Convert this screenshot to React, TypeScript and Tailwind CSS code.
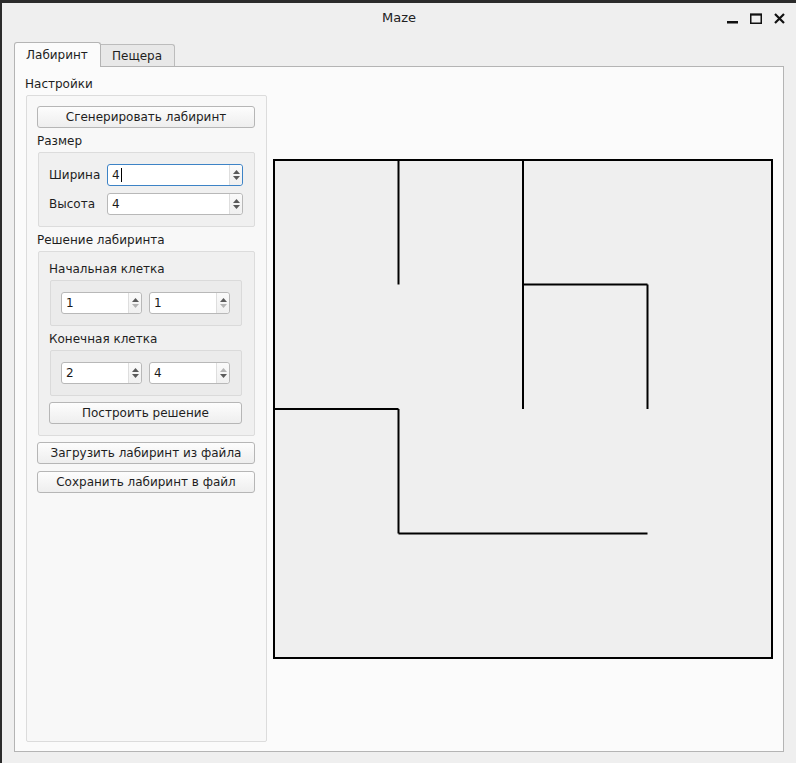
import React from "react";

const Btn = ({ label, className = "" }: { label: string; className?: string }) => (
  <div
    className={`h-[22px] rounded-[3px] border border-[#b6b6b6] bg-gradient-to-b from-[#fdfdfd] to-[#eeeeee] flex items-center justify-center text-[12px] text-[#1e1e1e] ${className}`}
  >
    {label}
  </div>
);

const Spin = ({
  value,
  width,
  upOff = false,
  downOff = false,
  focused = false,
}: {
  value: string;
  width: string;
  upOff?: boolean;
  downOff?: boolean;
  focused?: boolean;
}) => (
  <div
    className={`h-[22px] ${width} rounded-[3px] border bg-white flex ${
      focused ? "border-[#3d83c6]" : "border-[#b8b8b8]"
    }`}
  >
    <div className="flex-1 flex items-center pl-[4px] text-[12px] text-[#1a1a1a]">
      {value}
      {focused && <span className="ml-[1px] w-px h-[14px] bg-black" />}
    </div>
    <div className="w-[13px] border-l border-[#dedede] bg-gradient-to-b from-[#fafafa] to-[#f0f0f0] flex flex-col items-center justify-center gap-[2px] rounded-r-[3px]">
      <svg width="7" height="4" viewBox="0 0 7 4">
        <path d="M0 4 L3.5 0 L7 4 Z" fill={upOff ? "#b4b4b4" : "#5a5a5a"} />
      </svg>
      <svg width="7" height="4" viewBox="0 0 7 4">
        <path d="M0 0 L3.5 4 L7 0 Z" fill={downOff ? "#b4b4b4" : "#5a5a5a"} />
      </svg>
    </div>
  </div>
);

const Label = ({ text, className = "" }: { text: string; className?: string }) => (
  <div className={`h-[14px] leading-[14px] text-[12px] text-[#1e1e1e] ${className}`}>{text}</div>
);

const Maze = () => {
  const c = 124.5;
  const p = (k: number) => 1 + c * k;
  const walls: [number, number, number, number][] = [
    [1, 0, 1, 1],
    [2, 0, 2, 2],
    [2, 1, 3, 1],
    [3, 1, 3, 2],
    [0, 2, 1, 2],
    [1, 2, 1, 3],
    [1, 3, 3, 3],
  ];
  return (
    <svg width="501" height="501" viewBox="0 0 501 501" className="block">
      <rect x="1" y="1" width="498" height="498" fill="#efefef" stroke="#000" strokeWidth="2" />
      {walls.map(([x1, y1, x2, y2], i) => (
        <line key={i} x1={p(x1)} y1={p(y1)} x2={p(x2)} y2={p(y2)} stroke="#000" strokeWidth="2" />
      ))}
    </svg>
  );
};

export default function App() {
  return (
    <div
      className="w-[796px] h-[763px] bg-[#efefef] border-t-[3px] border-l-[2px] border-[#2b2b2b] flex flex-col text-[#1e1e1e]"
      style={{ fontFamily: '"DejaVu Sans", "Liberation Sans", sans-serif' }}
    >
      {/* title bar */}
      <div className="h-[30px] grid grid-cols-[1fr_auto_1fr] items-center">
        <div />
        <div className="text-[13px] text-[#222]">Maze</div>
        <div className="flex justify-end items-center gap-[12px] pr-[11px]">
          <svg width="11" height="11" viewBox="0 0 11 11">
            <rect x="0" y="8" width="11" height="2.5" fill="#111" />
          </svg>
          <svg width="12" height="11" viewBox="0 0 12 11">
            <rect x="0.75" y="1.5" width="10.5" height="8.75" fill="none" stroke="#111" strokeWidth="1.5" />
            <rect x="0" y="0.5" width="12" height="2" fill="#111" />
          </svg>
          <svg width="11" height="11" viewBox="0 0 11 11">
            <path d="M1 1 L10 10 M10 1 L1 10" stroke="#111" strokeWidth="2.2" />
          </svg>
        </div>
      </div>

      {/* tabs */}
      <div className="ml-[12px] mt-[9px] flex items-end">
        <div className="h-[25px] w-[87px] bg-[#fbfbfb] border border-b-0 border-[#b4b4b4] rounded-t-[3px] flex items-center pl-[11px] text-[12px] -mb-px relative">
          Лабиринт
        </div>
        <div className="h-[22px] w-[74px] bg-[#e8e8e8] border border-b-0 border-l-0 border-[#bcbcbc] rounded-tr-[3px] flex items-center pl-[11px] text-[12px]">
          Пещера
        </div>
      </div>

      {/* pane */}
      <div className="ml-[12px] w-[770px] h-[686px] bg-[#fbfbfb] border border-[#b4b4b4] flex">
        <div className="ml-[11px] w-[241px] flex flex-col pb-[9px]">
          <Label text="Настройки" className="mt-[10px] mb-[4px] -ml-[1px]" />
          <div className="flex-1 bg-[#f8f8f8] border border-[#dcdcdc] rounded-[2px] pl-[10px] pr-[11px] pt-[10px]">
            <Btn label="Сгенерировать лабиринт" />
            <Label text="Размер" className="mt-[6px] mb-[4px]" />
            <div className="bg-[#f0f0f0] border border-[#dcdcdc] rounded-[2px] ml-px pt-[11px] pb-[11px] pl-[10px] pr-[11px] flex flex-col gap-[7px]">
              <div className="flex items-center justify-between">
                <span className="text-[12px]">Ширина</span>
                <Spin value="4" width="w-[136px]" focused />
              </div>
              <div className="flex items-center justify-between">
                <span className="text-[12px]">Высота</span>
                <Spin value="4" width="w-[136px]" />
              </div>
            </div>
            <Label text="Решение лабиринта" className="mt-[6px] mb-[4px]" />
            <div className="bg-[#f0f0f0] border border-[#dcdcdc] rounded-[2px] ml-px pt-[10px] pb-[11px] pl-[10px] pr-[12px]">
              <Label text="Начальная клетка" className="mb-[4px]" />
              <div className="bg-[#ebebeb] border border-[#dadada] rounded-[2px] ml-px h-[46px] pl-[10px] flex items-center gap-[7px]">
                <Spin value="1" width="w-[81px]" downOff />
                <Spin value="1" width="w-[81px]" downOff />
              </div>
              <Label text="Конечная клетка" className="mt-[6px] mb-[4px]" />
              <div className="bg-[#ebebeb] border border-[#dadada] rounded-[2px] ml-px h-[46px] pl-[10px] flex items-center gap-[7px]">
                <Spin value="2" width="w-[81px]" />
                <Spin value="4" width="w-[81px]" upOff />
              </div>
              <Btn label="Построить решение" className="mt-[6px]" />
            </div>
            <Btn label="Загрузить лабиринт из файла" className="mt-[6px]" />
            <Btn label="Сохранить лабиринт в файл" className="mt-[7px]" />
          </div>
        </div>
        <div className="ml-[6px] flex items-center">
          <Maze />
        </div>
      </div>
    </div>
  );
}
